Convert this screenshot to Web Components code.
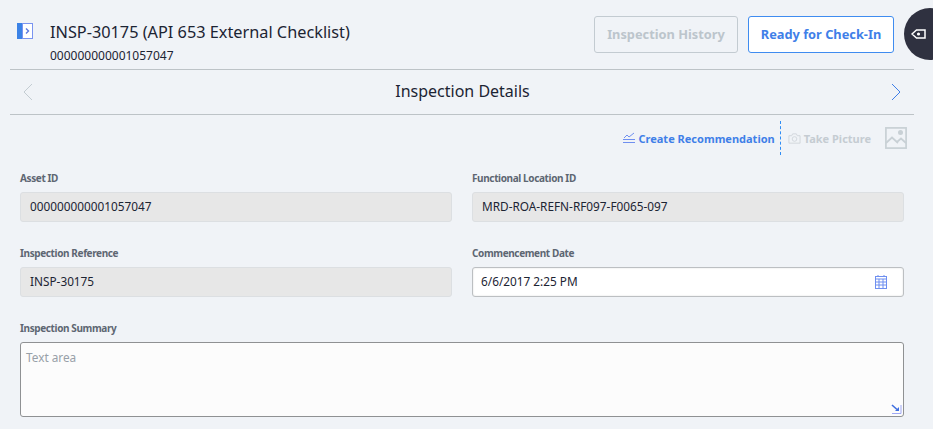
<!DOCTYPE html>
<html>
<head>
<meta charset="utf-8">
<style>
  html, body { margin: 0; height: 100%; background: #f0f3f7; overflow: hidden; }
  body { font-family: "Noto Sans", "Open Sans", sans-serif; color: #1c2433; }
</style>
</head>
<body>
<insp-page></insp-page>

<script>
class BaseElement extends HTMLElement {
  constructor() {
    super();
    this.attachShadow({ mode: "open" });
    this.shadowRoot.innerHTML = this.markup;
  }
}

class InspHeader extends BaseElement {
  get markup() {
    return `
      <style>
        :host { display: flex; height: 70px; margin: 0 19px 0 10px; box-sizing: border-box; border-bottom: 1px solid #bdc3c7; }
        .toggle { margin: 23px 0 0 7px; width: 16px; height: 16px; flex: none; }
        .titles { margin: 21px 0 0 17px; flex: 1; }
        .title { font-size: 16.3px; line-height: 22px; color: #1c2433; }
        .sub { font-size: 12px; line-height: 16px; margin-top: 5px; color: #1c2433; }
        .actions { display: flex; gap: 10px; margin: 16px 20px 0 0; }
      </style>
      <svg class="toggle" viewBox="0 0 16 16">
        <rect x="0" y="0" width="5" height="16" fill="#3b82e6"/>
        <rect x="5.5" y=".5" width="10" height="15" fill="#fff" stroke="#7a94f0"/>
        <path d="M9 5.5 L11.5 8 L9 10.5" fill="none" stroke="#5a78e0" stroke-width="1.4"/>
      </svg>
      <div class="titles">
        <div class="title"><slot name="title"></slot></div>
        <div class="sub"><slot name="sub"></slot></div>
      </div>
      <div class="actions"><slot></slot></div>
    `;
  }
}

class InspButton extends BaseElement {
  get markup() {
    return `
      <style>
        :host { display: flex; align-items: center; justify-content: center; box-sizing: border-box; height: 37px; width: 146px; padding-bottom: 2px;
          border: 1px solid #3f8cf0; border-radius: 3px; background: #fff; color: #3f7fe8; font-size: 12.8px; font-weight: 700; }
        :host([disabled]) { background: transparent; border-color: #c3cbd1; color: #bcc5cc; width: 144px; }
      </style>
      <slot></slot>
    `;
  }
}

class InspPager extends BaseElement {
  get markup() {
    return `
      <style>
        :host { display: flex; align-items: center; justify-content: space-between; height: 45px; margin: 0 19px 0 10px; box-sizing: border-box;
          border-bottom: 1px solid #bdc3c7; padding: 0 12px; }
        svg { width: 12px; height: 18px; fill: none; stroke-width: 1; }
        .title { font-size: 16px; color: #1c2433; padding: 0 0 2px 1px; }
      </style>
      <svg viewBox="0 0 12 18" stroke="#c3ccd2"><path d="M10 1 L2 9 L10 17"/></svg>
      <div class="title"><slot></slot></div>
      <svg viewBox="0 0 12 18" stroke="#3f7fe8"><path d="M2 1 L10 9 L2 17"/></svg>
    `;
  }
}

class InspToolbar extends BaseElement {
  get markup() {
    return `
      <style>
        :host { display: flex; align-items: center; justify-content: flex-end; height: 34px; margin: 6px 26px 0 0; font-size: 11px; font-weight: 700; }
        .item { display: flex; align-items: center; gap: 3px; }
        .rec { color: #3f7fe8; }
        .pic { color: #c5ccd2; }
        .sep { height: 34px; margin: 0 7px 0 5px; border-left: 1px dashed #2f8df5; }
        .img { margin-left: 14px; width: 22px; height: 22px; }
      </style>
      <div class="item rec">
        <svg width="12" height="12" viewBox="0 0 12 12" fill="none" stroke="#6f8ff0">
          <path d="M0 10.5 H12 M0 7.5 H12 M1 6 L4 3 L6 5 L11 1"/>
        </svg>
        Create Recommendation
      </div>
      <div class="sep"></div>
      <div class="item pic">
        <svg width="13" height="11" viewBox="0 0 14 11" fill="none" stroke="#d0d6db">
          <path d="M1 2.5 H4 L5 .5 H9 L10 2.5 H13 V10.5 H1 Z"/><circle cx="7" cy="6" r="2.5"/>
        </svg>
        Take Picture
      </div>
      <svg class="img" viewBox="0 0 22 22" fill="none" stroke="#c8d0d5" stroke-width="1.7">
        <rect x=".9" y=".9" width="20.2" height="20.2"/>
        <path d="M1 16 L7 10.5 L13 16 M12 15 L16 11.5 L21 16"/>
        <circle cx="15.5" cy="5.5" r="2.5" fill="#c8d0d5" stroke="none"/>
      </svg>
    `;
  }
}

class InspField extends BaseElement {
  get markup() {
    return `
      <style>
        :host { display: block; }
        .label { font-size: 10px; letter-spacing: -.38px; font-weight: 700; line-height: 14px; color: #5d6672; margin-bottom: 7px; }
        .box { display: flex; align-items: center; justify-content: space-between; box-sizing: border-box; height: 30px; padding: 0 9px 2px;
          background: #e7e7e7; border: 1px solid #dcdfe2; border-radius: 3px; font-size: 11.8px; color: #1c2433; }
        :host([editable]) .box { background: #fff; border-color: #bcbfc2; box-shadow: inset 0 0 2px #ddd; padding: 0 8px 2px; }
        :host([multiline]) .box { height: 75px; align-items: flex-start; padding: 6px 5px; background: #fcfcfc; border-color: #8f9193; color: #98a0a8; position: relative; }
        ::slotted(svg) { display: block; margin: 2px 8px 0 0; }
      </style>
      <div class="label"><slot name="label"></slot></div>
      <div class="box"><slot></slot></div>
    `;
  }
}

class InspPage extends BaseElement {
  get markup() {
    return `
      <style>
        :host { display: block; position: relative; height: 429px; overflow: hidden; }
        .form { display: grid; grid-template-columns: 432px 432px; column-gap: 20px; row-gap: 24px; padding: 0 0 0 20px; margin-top: 16px; }
        .wide { grid-column: 1 / 3; }
        .dock { position: absolute; left: 904px; top: 8px; width: 52px; height: 52px; border-radius: 50%; background: #2f3140; display: flex; align-items: center; padding-left: 7px; box-sizing: border-box; }
        .resize { position: absolute; left: 891px; top: 404px; }
      </style>
      <insp-header>
        <span slot="title">INSP-30175 (API 653 External Checklist)</span>
        <span slot="sub">000000000001057047</span>
        <insp-button disabled>Inspection History</insp-button>
        <insp-button>Ready for Check-In</insp-button>
      </insp-header>
      <insp-pager>Inspection Details</insp-pager>
      <insp-toolbar></insp-toolbar>
      <div class="form">
        <insp-field><span slot="label">Asset ID</span>000000000001057047</insp-field>
        <insp-field><span slot="label">Functional Location ID</span>MRD-ROA-REFN-RF097-F0065-097</insp-field>
        <insp-field><span slot="label">Inspection Reference</span>INSP-30175</insp-field>
        <insp-field editable><span slot="label">Commencement Date</span>6/6/2017 2:25 PM
          <svg width="12" height="14" viewBox="0 0 12 14" fill="none" stroke="#6f8ff0">
            <rect x=".5" y="1.5" width="11" height="12"/><path d="M0 4 H12 M0 7 H12 M0 10 H12 M4 4 V14 M8 4 V14 M3 0 V2 M9 0 V2"/>
          </svg>
        </insp-field>
        <insp-field class="wide" multiline><span slot="label">Inspection Summary</span>Text area</insp-field>
      </div>
      <div class="dock">
        <svg width="15" height="10" viewBox="0 0 15 10" fill="none" stroke="#fff" stroke-width="1.5">
          <path d="M1 5 L5.5 1 H14 V9 H5.5 Z"/><circle cx="7.5" cy="5" r=".8" fill="#fff"/>
        </svg>
      </div>
      <svg class="resize" width="11" height="10" viewBox="0 0 11 10" fill="none">
        <path d="M1 1 L6 5.5" stroke="#3f6fe0" stroke-width="1.6"/>
        <path d="M4 7 H8 V3 Z" fill="#3f6fe0"/>
        <path d="M1 9.5 H10 V1" stroke="#9fa8f5"/>
      </svg>
    `;
  }
}

customElements.define("insp-header", InspHeader);
customElements.define("insp-button", InspButton);
customElements.define("insp-pager", InspPager);
customElements.define("insp-toolbar", InspToolbar);
customElements.define("insp-field", InspField);
customElements.define("insp-page", InspPage);
</script>
</body>
</html>
